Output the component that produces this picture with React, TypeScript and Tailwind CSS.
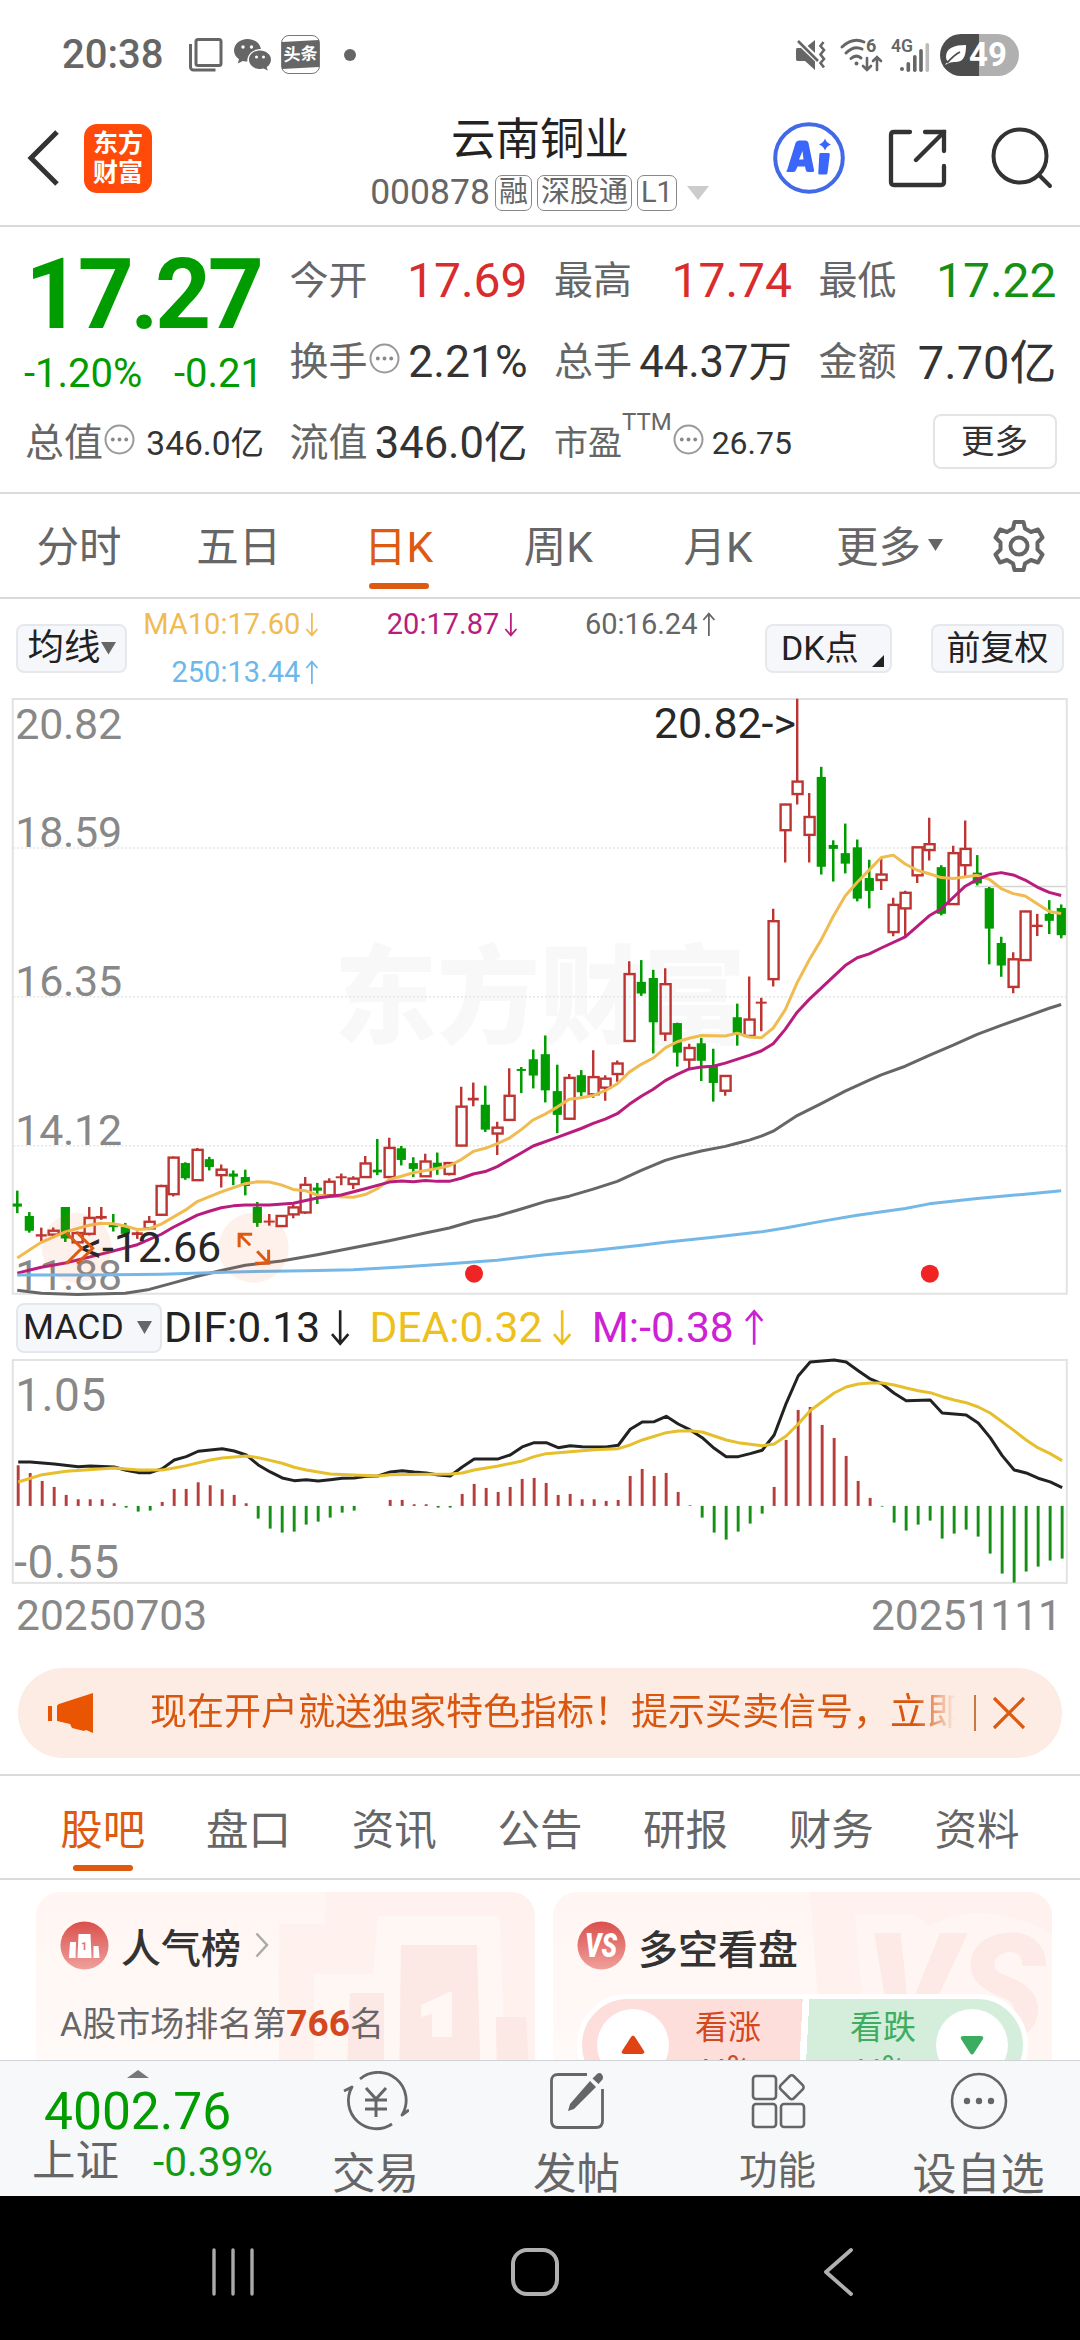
import type { ReactNode } from "react";
import { clsx } from "clsx";

type Candle = [color: "r" | "g", high: number, top: number, bottom: number, low: number];
type Point = [index: number, value: number];

const STEP = 12.005;
const K_SCALE = 610 / 1568;

const CANDLES: Candle[] = [
  ["g", 1285, 1318, 1326, 1343],
  ["g", 1340, 1350, 1388, 1393],
  ["r", 1380, 1397, 1403, 1415],
  ["r", 1380, 1388, 1398, 1402],
  ["g", 1327, 1327, 1408, 1417],
  ["r", 1390, 1394, 1418, 1420],
  ["r", 1327, 1355, 1396, 1400],
  ["r", 1327, 1350, 1357, 1360],
  ["g", 1345, 1373, 1379, 1390],
  ["g", 1368, 1378, 1396, 1400],
  ["r", 1390, 1392, 1399, 1409],
  ["r", 1350, 1365, 1382, 1385],
  ["r", 1270, 1273, 1347, 1350],
  ["r", 1197, 1200, 1294, 1300],
  ["g", 1212, 1214, 1253, 1257],
  ["r", 1175, 1180, 1258, 1260],
  ["g", 1198, 1204, 1224, 1233],
  ["r", 1218, 1231, 1245, 1277],
  ["g", 1233, 1241, 1249, 1271],
  ["g", 1231, 1250, 1273, 1297],
  ["g", 1314, 1327, 1368, 1378],
  ["r", 1345, 1362, 1367, 1375],
  ["r", 1348, 1350, 1376, 1378],
  ["r", 1320, 1328, 1346, 1356],
  ["r", 1250, 1270, 1341, 1345],
  ["g", 1265, 1277, 1285, 1319],
  ["r", 1253, 1262, 1297, 1299],
  ["r", 1241, 1248, 1253, 1271],
  ["r", 1248, 1254, 1268, 1281],
  ["r", 1196, 1215, 1250, 1252],
  ["g", 1152, 1231, 1238, 1245],
  ["r", 1149, 1175, 1250, 1253],
  ["g", 1170, 1176, 1206, 1220],
  ["g", 1199, 1214, 1229, 1250],
  ["r", 1190, 1210, 1248, 1250],
  ["g", 1187, 1213, 1228, 1244],
  ["r", 1212, 1214, 1242, 1246],
  ["r", 1018, 1069, 1169, 1171],
  ["r", 1007, 1046, 1053, 1068],
  ["g", 1015, 1064, 1128, 1134],
  ["r", 1108, 1123, 1138, 1193],
  ["r", 970, 1041, 1103, 1105],
  ["g", 967, 972, 977, 1034],
  ["g", 922, 947, 989, 1022],
  ["g", 886, 934, 1027, 1058],
  ["g", 961, 1029, 1090, 1137],
  ["r", 985, 995, 1100, 1102],
  ["g", 975, 988, 1032, 1042],
  ["r", 924, 993, 1037, 1046],
  ["r", 988, 997, 1020, 1054],
  ["r", 950, 958, 985, 1005],
  ["r", 695, 728, 900, 902],
  ["g", 692, 748, 778, 784],
  ["g", 717, 738, 852, 932],
  ["r", 713, 754, 881, 900],
  ["g", 853, 854, 930, 966],
  ["r", 907, 918, 948, 971],
  ["g", 892, 906, 951, 1003],
  ["g", 920, 963, 1008, 1056],
  ["r", 988, 990, 1028, 1041],
  ["g", 804, 839, 880, 912],
  ["r", 734, 845, 887, 890],
  ["r", 789, 799, 804, 875],
  ["r", 560, 592, 741, 760],
  ["r", 290, 292, 358, 441],
  ["r", 20, 233, 265, 292],
  ["r", 262, 324, 370, 441],
  ["g", 195, 221, 452, 472],
  ["g", 384, 396, 406, 490],
  ["g", 341, 417, 444, 469],
  ["g", 382, 402, 534, 541],
  ["g", 434, 481, 514, 559],
  ["r", 430, 472, 486, 512],
  ["r", 532, 550, 620, 631],
  ["r", 514, 519, 559, 631],
  ["r", 400, 402, 474, 494],
  ["r", 326, 394, 409, 436],
  ["g", 448, 453, 573, 577],
  ["r", 398, 417, 548, 550],
  ["r", 333, 406, 448, 476],
  ["g", 422, 467, 495, 500],
  ["g", 504, 507, 611, 703],
  ["g", 632, 648, 706, 735],
  ["r", 672, 690, 761, 777],
  ["r", 565, 567, 692, 694],
  ["r", 573, 601, 607, 630],
  ["g", 538, 573, 591, 625],
  ["g", 549, 558, 628, 636],
];

const MA10: Point[] = [
  [0, 1458], [2, 1418], [4, 1391], [6, 1374], [7, 1369], [8, 1370], [9, 1376], [10, 1385], [11, 1383],
  [12, 1371], [13, 1353], [14, 1335], [15, 1313], [17, 1288], [19, 1267], [20, 1262], [21, 1263],
  [22, 1270], [23, 1282], [24, 1285], [25, 1296], [26, 1299], [28, 1302], [29, 1295], [30, 1280],
  [31, 1257], [32, 1248], [33, 1239], [35, 1228], [36, 1221], [37, 1205], [38, 1184], [39, 1176],
  [40, 1164], [41, 1150], [42, 1128], [43, 1103], [44, 1088], [45, 1070], [46, 1050], [47, 1046],
  [48, 1040], [49, 1028], [50, 1010], [51, 980], [52, 960], [53, 944], [54, 918], [55, 902], [56, 893],
  [57, 886], [59, 887], [60, 880], [61, 890], [62, 892], [63, 867], [64, 820], [65, 750], [66, 692],
  [67, 640], [68, 580], [69, 527], [70, 492], [71, 460], [72, 428], [73, 422], [74, 445], [75, 461],
  [76, 470], [77, 480], [78, 482], [80, 474], [81, 484], [82, 508], [83, 521], [84, 527], [85, 547],
  [86, 567], [87, 572],
];

const MA20: Point[] = [
  [0, 1497], [2, 1482], [4, 1471], [6, 1456], [8, 1440], [10, 1424], [12, 1397], [13, 1379], [15, 1348],
  [16, 1338], [17, 1329], [18, 1324], [19, 1322], [21, 1322], [23, 1317], [25, 1304], [27, 1296],
  [29, 1280], [31, 1263], [32, 1260], [33, 1262], [34, 1259], [35, 1261], [36, 1261], [37, 1253],
  [38, 1242], [39, 1236], [40, 1223], [42, 1188], [43, 1170], [45, 1148], [47, 1125], [48, 1112],
  [49, 1101], [50, 1087], [51, 1063], [52, 1042], [53, 1024], [54, 1002], [55, 986], [56, 972],
  [57, 967], [58, 965], [59, 957], [61, 937], [62, 926], [63, 907], [64, 870], [65, 826], [66, 793],
  [67, 764], [69, 706], [70, 686], [71, 676], [72, 661], [74, 632], [75, 605], [76, 578], [77, 560],
  [78, 531], [79, 502], [80, 485], [81, 472], [82, 467], [83, 473], [84, 486], [85, 504], [86, 518],
  [87, 526],
];

const MA60: Point[] = [
  [0, 1541], [2, 1549], [5, 1552], [9, 1549], [11, 1539], [13, 1522], [15, 1505], [17, 1490], [19, 1477],
  [22, 1466], [25, 1450], [28, 1432], [31, 1414], [34, 1394], [36, 1381], [38, 1363], [40, 1350],
  [42, 1332], [44, 1313], [46, 1299], [48, 1281], [50, 1261], [52, 1233], [54, 1207], [55, 1198],
  [57, 1183], [59, 1171], [60, 1163], [61, 1155], [62, 1145], [63, 1132], [65, 1092], [67, 1061],
  [69, 1029], [71, 1001], [72, 987], [74, 965], [76, 937], [78, 911], [80, 883], [82, 860], [84, 838],
  [86, 816], [87, 806],
];

const MA250: Point[] = [
  [0, 1502], [6, 1502], [12, 1500], [18, 1494], [24, 1491], [28, 1488], [32, 1481], [36, 1473],
  [40, 1464], [44, 1450], [48, 1439], [52, 1425], [54, 1418], [58, 1405], [62, 1391], [64, 1381],
  [67, 1364], [70, 1348], [74, 1331], [76, 1319], [80, 1305], [84, 1294], [87, 1285],
];

const MACD_BARS = [
  122, 99, 75, 57, 33, 20, 20, 20, 8, -5, -17, -14, 12, 51, 51, 71, 62, 50, 33, 8, -38, -68, -80, -77,
  -56, -47, -35, -20, -14, 0, 0, 18, 18, 5, 5, -5, -5, 36, 66, 54, 42, 57, 81, 84, 69, 33, 36, 20, 20,
  15, 18, 90, 111, 90, 99, 42, 2, -35, -80, -101, -77, -53, -23, 57, 198, 288, 297, 243, 204, 150, 75,
  24, -2, -50, -74, -56, -44, -98, -83, -71, -92, -143, -203, -230, -197, -182, -164, -158,
];

const DIF: Point[] = [
  [0, 516], [1, 516], [3, 522], [5, 530], [6, 528], [8, 531], [9, 541], [10, 548], [11, 548], [12, 536],
  [13, 510], [14, 500], [15, 484], [17, 476], [18, 483], [19, 495], [20, 525], [21, 546], [22, 564],
  [23, 572], [24, 569], [25, 573], [26, 569], [27, 565], [28, 564], [29, 559], [30, 558], [31, 546],
  [32, 542], [33, 546], [34, 549], [35, 555], [36, 558], [37, 531], [38, 507], [40, 507], [41, 495],
  [42, 471], [43, 458], [44, 458], [45, 473], [46, 467], [47, 470], [49, 471], [50, 466], [51, 418],
  [52, 396], [53, 395], [54, 379], [55, 402], [56, 420], [57, 443], [58, 475], [59, 500], [60, 500],
  [61, 491], [62, 481], [63, 435], [64, 340], [65, 258], [66, 216], [68, 210], [69, 216], [70, 242],
  [71, 267], [72, 282], [73, 310], [74, 332], [76, 330], [77, 369], [79, 375], [80, 399], [81, 443],
  [82, 497], [83, 540], [84, 549], [85, 565], [86, 576], [87, 593],
];

const DEA: Point[] = [
  [0, 576], [2, 554], [4, 544], [8, 534], [10, 540], [12, 540], [13, 534], [14, 527], [16, 510],
  [17, 504], [19, 498], [20, 503], [22, 520], [23, 532], [24, 540], [26, 552], [28, 555], [30, 558],
  [31, 554], [36, 552], [37, 549], [38, 540], [40, 528], [42, 513], [43, 500], [44, 491], [46, 485],
  [48, 479], [50, 476], [51, 465], [52, 450], [54, 428], [55, 423], [56, 422], [57, 426], [59, 450],
  [60, 458], [62, 467], [63, 462], [64, 438], [65, 402], [66, 362], [67, 335], [68, 309], [69, 291],
  [70, 282], [71, 279], [72, 279], [73, 285], [74, 294], [75, 302], [76, 308], [77, 320], [78, 330],
  [79, 338], [80, 351], [81, 369], [83, 422], [84, 450], [85, 474], [86, 491], [87, 512],
];

function toPoints(data: Point[], x0: number, scale: number) {
  return data.map(([i, v]) => `${(x0 + i * STEP).toFixed(1)},${(v * scale).toFixed(1)}`).join(" ");
}

function StatusBar() {
  return (
    <div className="flex h-[110px] items-center justify-between pl-[62px] pr-[61px] text-[#666]">
      <div className="flex items-center">
        <span className="w-[127px] text-[40px] font-medium leading-none">20:38</span>
        <svg width="34" height="34" viewBox="0 0 34 34" fill="none" stroke="#666" strokeWidth="3">
          <rect x="7" y="1.5" width="25" height="26" rx="2" />
          <path d="M1.5 6v23a3 3 0 0 0 3 3h22" />
        </svg>
        <svg className="ml-[11px]" width="38" height="32" viewBox="0 0 38 32" fill="#666">
          <path d="M13.5 0C6 0 0 5 0 11.5c0 3.600 2 6.700 5 8.800L3.800 24.500l5-2.500c1.500.4 3 .6 4.500.6C13 15 19 10 27 10 26 4 20.500 0 13.500 0z" />
          <path d="M37 20.500c0-5-5-9-11-9s-11 4-11 9.200 5 9.200 11 9.200c1.300 0 2.500-.2 3.700-.5l4 2.200-1-3.500c2.600-1.700 4.300-4.400 4.300-7.600z" />
          <g fill="#fff">
            <circle cx="9" cy="8" r="1.700" />
            <circle cx="17.500" cy="8" r="1.700" />
            <circle cx="22.500" cy="18" r="1.500" />
            <circle cx="29.500" cy="18" r="1.500" />
          </g>
        </svg>
        <div className="ml-[9px] flex h-[39px] w-[39px] items-center rounded-[8px] border border-[#777]">
          <div className="flex h-[27px] w-full -skew-y-3 items-center justify-center bg-[#666] text-[17px] font-bold leading-none text-white">
            头条
          </div>
        </div>
        <span className="ml-[24px] h-[12px] w-[12px] rounded-full bg-[#666]" />
      </div>
      <div className="flex items-center">
        <svg width="30" height="32" viewBox="0 0 30 32">
          <path d="M1 9h8l10-8v30L9 22H1.500Q0 22 0 20V11Q0 9 1 9z" fill="#666" />
          <path d="M0 0l23 22" stroke="#fff" strokeWidth="6" />
          <path d="M2 2l20 20" stroke="#666" strokeWidth="2.600" />
          <path d="M27.500 3l-3 4 3.500 4-3.500 4.500 3.500 4.500-3.500 4 3.500 4.500" fill="none" stroke="#666" strokeWidth="2.600" />
        </svg>
        <svg className="ml-[14px] overflow-visible" width="46" height="34" viewBox="0 0 46 34" fill="none" stroke="#666" strokeWidth="3" strokeLinecap="round">
          <path d="M2 9Q13-1 24 4" />
          <path d="M6 15Q14 7 22 11" />
          <path d="M11 20.500Q16 16 21 20" />
          <circle cx="16.500" cy="25.500" r="1" fill="#666" strokeWidth="2" />
          <path d="M27 20v12M23 28l4 4 4-4M37 32V19M33 23l4-4 4 4" strokeWidth="2.600" />
          <text x="26" y="14" fontSize="18" fontWeight="700" fill="#666" stroke="none">
            6
          </text>
        </svg>
        <svg className="ml-[5px] overflow-visible" width="40" height="34" viewBox="0 0 40 34" fill="#666">
          <text x="0" y="14" fontSize="18" fontWeight="600" textLength="22" lengthAdjust="spacingAndGlyphs">
            4G
          </text>
          <circle cx="11" cy="31" r="2" />
          <rect x="15.500" y="24" width="3.600" height="10" rx="1.800" />
          <rect x="22" y="17" width="3.600" height="17" rx="1.800" />
          <rect x="28.200" y="11" width="3.600" height="23" rx="1.800" />
          <rect x="34.500" y="5" width="3.600" height="29" rx="1.800" fill="#bbb" />
        </svg>
        <div className="ml-[9px] flex h-[42px] w-[79px] items-center overflow-hidden rounded-full bg-linear-to-r from-[#4d4d4d] from-50% to-[#b0b0b0] to-50%">
          <svg className="ml-[4px] shrink-0" width="23" height="22" viewBox="0 0 23 22">
            <path d="M2 13C2 4 10 1 22 1c0 8-1 17-10 17-3 0-5 0-7 1L1 21l3-4Q2 16 2 13z" fill="#fff" />
            <path d="M3 19Q10 11 16 8" fill="none" stroke="#4d4d4d" strokeWidth="1.800" />
          </svg>
          <span className="ml-[2px] text-[33px] font-bold leading-none text-white">49</span>
        </div>
      </div>
    </div>
  );
}

function Badge({ children }: { children: ReactNode }) {
  return (
    <span className="flex h-[36px] items-center rounded-[7px] border-[1.500px] border-[#888] px-[3px] text-[29px] leading-none">
      {children}
    </span>
  );
}

function Header() {
  return (
    <header className="grid h-[117px] grid-cols-[1fr_auto_1fr] border-b-2 border-[#dadada]">
      <div className="flex h-[97px] items-center pl-[27px]">
        <svg width="32" height="56" viewBox="0 0 32 56" fill="none" stroke="#333" strokeWidth="5">
          <path d="M30 2L4 28l26 26" />
        </svg>
        <div className="ml-[25px] flex h-[69px] w-[68px] flex-col items-center justify-center rounded-[13px] bg-[#ff4a0a] text-[25px] font-bold leading-[29px] text-white">
          <span>东方</span>
          <span>财富</span>
        </div>
      </div>
      <div className="flex flex-col items-center">
        <h1 className="flex h-[58px] items-center pt-[3px] text-[44.500px] leading-none text-[#222]">云南铜业</h1>
        <div className="flex h-[50px] items-center gap-[5px] text-[#666]">
          <span className="text-[35.500px] leading-none">000878</span>
          <Badge>融</Badge>
          <Badge>深股通</Badge>
          <Badge>L1</Badge>
          <svg className="ml-[4px]" width="24" height="16" viewBox="0 0 24 16">
            <path d="M1 1h22L12 15z" fill="#ccc" />
          </svg>
        </div>
      </div>
      <div className="flex h-[97px] items-center justify-end pr-[27px]">
        <svg width="72" height="72" viewBox="0 0 72 72">
          <circle cx="36" cy="36" r="33.800" fill="none" stroke="#4169e8" strokeWidth="4" />
          <g fill="#3a66fb">
            <path d="M14 48.500L22.500 21Q23.500 18.500 26 18.500h6.500Q35 18.500 35.500 21l5.500 27q.4 2-2 2h-4q-2 0-2.200-2l-.8-3.500h-7.500l-1.500 3.500q-.7 2-2.500 2h-5q-2.200 0-2.500-1.500zM26 37.500h4.500l-1-8.500z" fillRule="evenodd" />
            <path d="M47.500 31h8q1.500 0 1.300 1.500L54.500 51q-.3 1.500-1.800 1.500h-6Q45 52.500 45.300 51l1-18.500q0-1.500 1.200-1.500z" />
            <path d="M52 16.500q1.500 4.500 6 6-4.500 1.500-6 6-1.500-4.500-6-6 4.500-1.500 6-6z" />
          </g>
        </svg>
        <svg className="ml-[43px]" width="59" height="59" viewBox="0 0 59 59" fill="none" stroke="#333" strokeWidth="4.300" strokeLinecap="round">
          <path d="M22 3H6Q3 3 3 6v47q0 3 3 3h47q3 0 3-3V37" />
          <path d="M37 3h19v19" />
          <path d="M56 3L28 31" />
        </svg>
        <svg className="ml-[44px]" width="62" height="62" viewBox="0 0 62 62" fill="none" stroke="#333" strokeWidth="4" strokeLinecap="round">
          <circle cx="29" cy="29" r="26.500" />
          <path d="M48 48l11 11" />
        </svg>
      </div>
    </header>
  );
}

function MoreDots() {
  return (
    <svg className="-mt-[7px] ml-px shrink-0" width="31" height="31" viewBox="0 0 31 31">
      <circle cx="15.500" cy="15.500" r="14" fill="none" stroke="#999" strokeWidth="2" />
      <g fill="#888">
        <circle cx="8.800" cy="15.500" r="1.900" />
        <circle cx="15.500" cy="15.500" r="1.900" />
        <circle cx="22.200" cy="15.500" r="1.900" />
      </g>
    </svg>
  );
}

interface QuoteCellProps {
  label: string;
  value: string;
  valueClass: string;
  dots?: boolean;
}

function QuoteCell({ label, value, valueClass, dots }: QuoteCellProps) {
  return (
    <div className="flex h-[81px] items-center justify-between">
      <span className="flex items-center text-[39px] leading-none text-[#666]">
        {label}
        {dots && <MoreDots />}
      </span>
      <span className={clsx("whitespace-nowrap leading-none", valueClass)}>{value}</span>
    </div>
  );
}

function Quote() {
  return (
    <section className="grid h-[267px] grid-cols-[238px_238px_238px_238px] content-start gap-x-[26.500px] border-b-2 border-[#dadada] pl-[25px] pt-[14px]">
      <div className="row-span-2 h-[162px] text-[#009c00]">
        <div className="pt-[4px] text-[98px] font-bold leading-[100px] tracking-[-3.600px]">17.27</div>
        <div className="flex items-center justify-between pt-[6px] text-[40px] leading-[46px]">
          <span className="-ml-px">-1.20%</span>
          <span>-0.21</span>
        </div>
      </div>
      <QuoteCell label="今开" value="17.69" valueClass="text-[48px] text-[#d92c2c]" />
      <QuoteCell label="最高" value="17.74" valueClass="text-[48px] text-[#d92c2c]" />
      <QuoteCell label="最低" value="17.22" valueClass="text-[48px] text-[#149014]" />
      <QuoteCell label="换手" value="2.21%" valueClass="text-[44.500px] text-[#333]" dots />
      <QuoteCell label="总手" value="44.37万" valueClass="text-[43.500px] text-[#333]" />
      <QuoteCell label="金额" value="7.70亿" valueClass="text-[47px] text-[#333]" />
      <QuoteCell label="总值" value="346.0亿" valueClass="-mr-px text-[33.500px] text-[#333]" dots />
      <QuoteCell label="流值" value="346.0亿" valueClass="text-[43.500px] text-[#333]" />
      <div className="flex h-[81px] items-center justify-between text-[#666]">
        <span className="flex items-center text-[34px] leading-none">
          市盈
          <span className="-mt-[42px] text-[24px] leading-none">TTM</span>
          <MoreDots />
        </span>
        <span className="text-[32px] leading-none text-[#333]">26.75</span>
      </div>
      <div className="flex h-[81px] items-center justify-end">
        <button className="mb-[4px] h-[55px] w-[124px] rounded-[8px] border-2 border-[#e4e4e4] text-[33.500px] leading-none text-[#333]">
          更多
        </button>
      </div>
    </section>
  );
}

const PERIODS = ["分时", "五日", "日K", "周K", "月K"];

function PeriodTabs() {
  return (
    <nav className="flex h-[105px] border-b-2 border-[#dadada] text-[42.500px] leading-none text-[#666]">
      {PERIODS.map((p) => (
        <div
          key={p}
          className={clsx("flex w-[159.800px] flex-col items-center pt-[32px]", p === "日K" && "text-[#dd5a10]")}
        >
          <span className="-ml-[2px] leading-[44px]">{p}</span>
          {p === "日K" && <span className="mt-[13px] h-[6px] w-[60px] rounded-full bg-[#dd5a10]" />}
        </div>
      ))}
      <div className="flex w-[183px] justify-center pt-[32px] leading-[44px]">
        更多
        <svg className="ml-[6px] mt-[12px]" width="18" height="15" viewBox="0 0 18 15">
          <path d="M1 1h15L8.500 13z" fill="#666" />
        </svg>
      </div>
      <svg className="ml-[10px] mt-[25px]" width="54" height="54" viewBox="0 0 54 54" fill="none" stroke="#666" strokeWidth="4" strokeLinejoin="round">
        <path d="M22.500 3h9l1.500 6.500 6 3.500 7-2.500 4.500 8-5 5v7l5 5-4.500 8-7-2.500-6 3.500-1.500 6.500h-9L21 44.500 15 41l-7 2.500-4.500-8 5-5v-7l-5-5 4.500-8L15 13l6-3.500z" />
        <circle cx="27" cy="27" r="8.500" />
      </svg>
    </nav>
  );
}

function Arrow({ up, size = 28 }: { up?: boolean; size?: number }) {
  return (
    <svg
      className={clsx("inline-block shrink-0", up && "rotate-180")}
      width={size * 0.55}
      height={size}
      viewBox="0 0 15.400 28"
      fill="none"
      stroke="currentColor"
      strokeWidth="2"
    >
      <path d="M7.700 1v25M1.500 19l6.200 7.200L13.900 19" />
    </svg>
  );
}

function MaLabel({ text, up, className }: { text: string; up?: boolean; className: string }) {
  return (
    <span className={clsx("flex h-[48px] items-center gap-[5px] text-[29px] leading-none", className)}>
      {text}
      <Arrow up={up} size={25} />
    </span>
  );
}

function MaRow() {
  return (
    <div className="flex h-[92px] items-start px-[16px]">
      <button className="mt-[25px] flex h-[49px] w-[111px] items-center justify-center rounded-[8px] border-2 border-[#e6e8eb] bg-[#f6f7fa] text-[36.500px] leading-none text-[#222]">
        均线
        <svg className="shrink-0" width="15" height="14" viewBox="0 0 15 14">
          <path d="M0 1h15L7.500 13.500z" fill="#666" />
        </svg>
      </button>
      <div className="ml-[15px] mt-[2px] grid w-[600px] grid-cols-[177px_266px_157px]">
        <MaLabel text="MA10:17.60" className="justify-end text-[#f0bb50]" />
        <MaLabel text="20:17.87" className="justify-end pr-[67px] text-[#b81c7c]" />
        <MaLabel text="60:16.24" up className="text-[#666]" />
        <MaLabel text="250:13.44" up className="justify-end text-[#6cb8ea]" />
      </div>
      <button className="ml-auto mt-[25px] flex h-[49px] w-[127px] items-center rounded-[8px] border-2 border-[#e6e8eb] bg-[#f6f7fa] pl-[14px] text-[34px] leading-none text-[#222]">
        DK点
        <svg className="ml-[13px] mt-[26px]" width="12" height="12" viewBox="0 0 12 12">
          <path d="M12 0v12H0z" fill="#222" />
        </svg>
      </button>
      <button className="ml-[39px] mt-[25px] h-[49px] w-[133px] rounded-[8px] border-2 border-[#e6e8eb] bg-[#f6f7fa] text-[34px] leading-none text-[#222]">
        前复权
      </button>
    </div>
  );
}

const AXIS = [
  { label: "20.82", y: 48.5 },
  { label: "18.59", y: 156.5 },
  { label: "16.35", y: 305.5 },
  { label: "14.12", y: 454.5 },
  { label: "11.88", y: 599.5 },
];

function CandleShape({ candle, index }: { candle: Candle; index: number }) {
  const [color, high, top, bottom, low] = candle;
  const x = 17 + index * STEP;
  const y = (v: number) => v * K_SCALE;
  if (color === "g") {
    return (
      <g fill="#009c00">
        <rect x={x - 1.2} y={y(high)} width="2.500" height={y(low - high)} />
        <rect x={x - 4.5} y={y(top)} width="9.200" height={y(bottom - top)} />
      </g>
    );
  }
  // a body thinner than its outline is drawn as a plain bar
  if (bottom - top < 8) {
    return (
      <g fill="#bd3532">
        <rect x={x - 1.2} y={y(high)} width="2.500" height={y(low - high)} />
        <rect x={x - 5.5} y={y(top)} width="11" height={y(bottom - top)} />
      </g>
    );
  }
  return (
    <g fill="none" stroke="#bd3532" strokeWidth="2.400">
      <path d={`M${x} ${y(high)}V${y(top)}M${x} ${y(bottom)}V${y(low)}`} />
      <rect x={x - 4.6} y={y(top)} width="10" height={y(bottom - top)} />
    </g>
  );
}

function KChart() {
  return (
    <svg className="block" width="1080" height="610" viewBox="0 0 1080 610">
      <text x="334" y="344" fontSize="107" fontWeight="800" fill="#f8f8f8" textLength="412" lengthAdjust="spacingAndGlyphs">
        东方财富
      </text>
      <g stroke="#e6e6e6" strokeWidth="1.500" strokeDasharray="2 2">
        <path d="M13 157H1067M13 306H1067M13 455H1067" />
      </g>
      <rect x="12.500" y="8" width="1054.500" height="595" fill="none" stroke="#e2e2e2" strokeWidth="2" />
      <path d="M975 195.500H1066" stroke="#d4d4d4" strokeWidth="1.500" />
      {CANDLES.map((c, i) => (
        <CandleShape key={i} candle={c} index={i} />
      ))}
      <g fontSize="43" fill="#888">
        {AXIS.map((a) => (
          <text key={a.label} x="15" y={a.y} textLength="107">
            {a.label}
          </text>
        ))}
      </g>
      <g fill="none" strokeWidth="3" strokeLinejoin="round">
        <polyline points={toPoints(MA10, 17, K_SCALE)} stroke="#f0bb50" />
        <polyline points={toPoints(MA20, 17, K_SCALE)} stroke="#b81c7c" />
        <polyline points={toPoints(MA60, 17, K_SCALE)} stroke="#666" />
        <polyline points={toPoints(MA250, 17, K_SCALE)} stroke="#74b8e8" />
      </g>
      <circle cx="76.500" cy="557" r="35" fill="#f05a14" fillOpacity="0.09" />
      <circle cx="253.500" cy="557" r="35" fill="#f05a14" fillOpacity="0.09" />
      <g fontSize="43" fill="#282828">
        <text x="654" y="47" textLength="142">
          {"20.82->"}
        </text>
        <text x="80" y="571" textLength="141">
          {"<-12.66"}
        </text>
      </g>
      <g fill="none" stroke="#dd5a10" strokeWidth="3">
        <path d="M66 542l15.500 15.500L66 573M77 542l15.500 15.500L77 573" />
        <path d="M252 543.500h-13v13M239 543.500l11 11M255 572.500h13.500v-13.500M268.500 572.500l-11.500-12" />
      </g>
      <circle cx="474" cy="583" r="9" fill="#f02424" />
      <circle cx="930" cy="583" r="9" fill="#f02424" />
    </svg>
  );
}

function MacdRow() {
  return (
    <div className="flex h-[55px] items-center pl-[16px] text-[42.500px] leading-none">
      <button className="flex h-[50px] w-[146px] items-center justify-between rounded-[8px] border-2 border-[#e4e8ee] bg-[#f6f7fa] pl-[5px] pr-[8px] text-[35.500px] leading-none text-[#222]">
        MACD
        <svg width="15" height="13" viewBox="0 0 15 13">
          <path d="M0 0h15L7.500 13z" fill="#666" />
        </svg>
      </button>
      <span className="ml-[2px] flex items-center gap-[10px] text-[#222]">
        DIF:0.13
        <Arrow size={37} />
      </span>
      <span className="ml-[19px] flex items-center gap-[10px] text-[#eec01c]">
        DEA:0.32
        <Arrow size={37} />
      </span>
      <span className="ml-[19px] flex items-center gap-[10px] text-[#cc22d4]">
        M:-0.38
        <Arrow up size={37} />
      </span>
    </div>
  );
}

function MacdChart() {
  return (
    <svg className="block" width="1080" height="235" viewBox="0 65 1080 235">
      <rect x="12.500" y="70" width="1054.500" height="223" fill="none" stroke="#e2e2e2" strokeWidth="2" />
      {MACD_BARS.map((v, i) => (
        <rect
          key={i}
          x={16.5 + i * STEP}
          y={v > 0 ? 216 - v / 3 : 216}
          width="2.900"
          height={Math.abs(v) / 3}
          fill={v > 0 ? "#b83c3a" : "#149014"}
        />
      ))}
      <g fontSize="46" fill="#888">
        <text x="15" y="121" textLength="91">
          1.05
        </text>
        <text x="14" y="288.500" textLength="105">
          -0.55
        </text>
      </g>
      <g fill="none" strokeWidth="3" strokeLinejoin="round">
        <polyline points={toPoints(DIF, 18, 1 / 3)} stroke="#222" />
        <polyline points={toPoints(DEA, 18, 1 / 3)} stroke="#e6bf2c" />
      </g>
    </svg>
  );
}

function Banner() {
  return (
    <div className="mx-[18px] mt-[26px] flex h-[90px] items-center rounded-full bg-[#fcece3] pl-[30px] text-[#d9560e]">
      <svg width="46" height="40" viewBox="0 0 46 40" fill="#ea5504">
        <path d="M0 13h4v15H0zM9 13Q9 12 11 11L45 0v40l-7-3-2 1-12-3-2-4-13-3z" />
      </svg>
      <div className="ml-[56px] w-[806px] overflow-hidden whitespace-nowrap text-[37px] leading-[50px] [mask-image:linear-gradient(to_right,#000_95%,transparent_100%)]">
        现在开户就送独家特色指标！提示买卖信号，立即领取
      </div>
      <span className="ml-[18px] h-[36px] w-[2px] bg-[#c97845]" />
      <svg className="ml-[16px]" width="34" height="34" viewBox="0 0 34 34" stroke="#dd5a10" strokeWidth="3.200">
        <path d="M2 2l30 30M32 2L2 32" />
      </svg>
    </div>
  );
}

const SECTIONS = ["股吧", "盘口", "资讯", "公告", "研报", "财务", "资料"];

function SectionTabs() {
  return (
    <nav className="mt-[16px] flex h-[106px] border-y-2 border-[#dadada] px-[30px] text-[42.500px] text-[#666]">
      {SECTIONS.map((s, i) => (
        <div key={s} className={clsx("flex w-[145.700px] flex-col items-center pt-[33px]", i === 0 && "text-[#dd5a10]")}>
          <span className="leading-[44px]">{s}</span>
          {i === 0 && <span className="mt-[12px] h-[6px] w-[60px] rounded-full bg-[#dd5a10]" />}
        </div>
      ))}
    </nav>
  );
}

function RankCard() {
  return (
    <div className="relative h-[200px] w-[499px] overflow-hidden rounded-t-[24px] bg-linear-to-b from-[#fff6f3] to-[#fffaf8]">
      <svg className="absolute inset-0" width="499" height="200" viewBox="0 0 499 200">
        <path d="M290 0h209v200H243V32h46z" fill="#fef1ee" />
        <path d="M342 24h122l6 176H278V82h59z" fill="#fff7f4" />
        <path d="M365 53h76l4 147h-82zM314 101h34v99h-38zM460 125h30l4 75h-33z" fill="#fce8e5" />
        <path d="M385 113l31-14v46h-17v-24l-14 4zM396 121h20v24h-20z" fill="#fff7f4" />
      </svg>
      <div className="relative flex items-start pl-[24px] pt-[29px]">
        <svg width="49" height="49" viewBox="0 0 49 49">
          <defs>
            <linearGradient id="badge" x1="0" y1="0" x2="0" y2="1">
              <stop offset="0" stopColor="#d9504c" />
              <stop offset="1" stopColor="#f0a09c" />
            </linearGradient>
          </defs>
          <circle cx="24.500" cy="24.500" r="24" fill="url(#badge)" />
          <path d="M10 21h6l-.5 16H9zM18.500 13h12l1 24h-14zM33.500 25h5l1 12h-6z" fill="#fff" />
          <text x="21" y="29" fontSize="11" fontWeight="700" fill="#e27773">
            1
          </text>
        </svg>
        <span className="ml-[12px] pt-[4px] text-[40px] font-medium leading-[49px] text-[#333]">人气榜</span>
        <svg className="ml-[14px] mt-[11px]" width="14" height="26" viewBox="0 0 14 26" fill="none" stroke="#aaa" strokeWidth="2.500">
          <path d="M1.500 1.500L12 13 1.500 24.500" />
        </svg>
      </div>
      <p className="relative pl-[24px] pt-[30px] text-[34px] leading-[40px] text-[#666]">
        A股市场排名第<b className="text-[37px] text-[#d4481e]">766</b>名
      </p>
    </div>
  );
}

function VoteRate() {
  return (
    <div className="pt-[2px] text-[28px] leading-[38px]">
      44<span className="text-[33px]">%</span>
    </div>
  );
}

function VoteCard() {
  return (
    <div className="relative h-[200px] w-[499px] overflow-hidden rounded-t-[24px] bg-linear-to-b from-[#fff6f3] to-[#fffaf8]">
      <svg className="absolute inset-0" width="499" height="200" viewBox="0 0 499 200">
        <path d="M257 0h242v200H272z" fill="#fef1ee" />
        <path d="M302 22h60l14 13q28-18 64-13 40 6 59 22v156H317z" fill="#fff6f3" />
        <text x="312" y="148" fontSize="150" fontWeight="900" fontStyle="italic" fill="#fde9e6" textLength="180" lengthAdjust="spacingAndGlyphs">
          VS
        </text>
      </svg>
      <div className="relative flex items-start pl-[24px] pt-[29px]">
        <svg width="49" height="49" viewBox="0 0 49 49">
          <circle cx="24.500" cy="24.500" r="24" fill="url(#badge)" />
          <text x="8" y="36" fontSize="33" fontWeight="900" fontStyle="italic" fill="#fff" textLength="32" lengthAdjust="spacingAndGlyphs">
            VS
          </text>
        </svg>
        <span className="ml-[12px] pt-[4px] text-[40px] font-medium leading-[51px] text-[#333]">多空看盘</span>
      </div>
      <div className="relative ml-[24px] mt-[18px] flex h-[102px] w-[451px] overflow-hidden rounded-full border-[5px] border-white bg-linear-[93deg,#fddedb_49.500%,#fff_49.500%,#fff_51%,#d4eedb_51%]">
        <span className="ml-[15px] mt-[10px] flex h-[72px] w-[72px] shrink-0 items-center justify-center rounded-full bg-white">
          <svg width="24" height="20" viewBox="0 0 24 20">
            <path d="M10 2q2-3 4 0l9 14q1 3-2 3H3q-3 0-2-3z" fill="#e04416" />
          </svg>
        </span>
        <div className="ml-[26px] mt-[10px] text-[33px] leading-[38px] text-[#d4481e]">
          看涨
          <VoteRate />
        </div>
        <div className="ml-auto mt-[10px] text-[33px] leading-[38px] text-[#3ead62]">
          看跌
          <VoteRate />
        </div>
        <span className="ml-[20px] mr-[15px] mt-[10px] flex h-[72px] w-[72px] shrink-0 items-center justify-center rounded-full bg-white">
          <svg width="24" height="20" viewBox="0 0 24 20">
            <path d="M10 18q2 3 4 0l9-14q1-3-2-3H3Q0 1 1 4z" fill="#3aad60" />
          </svg>
        </span>
      </div>
    </div>
  );
}

function BarItem({ label, className, children }: { label: string; className?: string; children: ReactNode }) {
  return (
    <div className="flex w-[201px] flex-col items-center pt-[10px]">
      {children}
      <span className={clsx("whitespace-nowrap leading-[40px]", className ?? "mt-[24px] text-[43.500px]")}>{label}</span>
    </div>
  );
}

function BottomBar() {
  return (
    <footer className="flex h-[136px] overflow-hidden border-t border-[#d0d2d6] bg-[#f6f8fa] text-[#666]">
      <div className="w-[275px] text-[#149a14]">
        <svg className="ml-[127px] mt-[9px]" width="22" height="8" viewBox="0 0 22 8">
          <path d="M0 8h22L11 0z" fill="#777" />
        </svg>
        <div className="pl-[44px] pt-[9px] text-[51.500px] leading-[50px] text-[#009c00]">4002.76</div>
        <div className="flex items-center pl-[32px] text-[40.500px] leading-[50px]">
          <span className="w-[121px] text-[43.500px] text-[#666]">上证</span>
          -0.39%
        </div>
      </div>
      <BarItem label="交易">
        <svg width="66" height="60" viewBox="0 0 66 60" fill="none" stroke="#666" strokeWidth="2.800">
          <path d="M17 8A28 28 0 0 1 59 44l7-5" strokeLinejoin="round" />
          <path d="M49 53A28 28 0 0 1 9 16L1 20" strokeLinejoin="round" />
          <path d="M23 17l10 11 10-11M22 29h22M22 38h22M33 28v18" strokeWidth="3" />
        </svg>
      </BarItem>
      <BarItem label="发帖">
        <svg width="56" height="60" viewBox="0 0 56 60">
          <path d="M38 3.500H9q-6.500 0-6.500 6.500v40q0 6.500 6.500 6.500h38q6.500 0 6.500-6.500V18" fill="none" stroke="#666" strokeWidth="2.800" />
          <path d="M41 10l6 6-22 22-6 2 2-7zM43.500 7.500L48 3q3-2 5 .5t.5 5L49.500 13z" fill="#666" />
        </svg>
      </BarItem>
      <BarItem label="功能" className="mt-[20px] text-[38.500px]">
        <svg width="56" height="60" viewBox="0 0 56 60" fill="none" stroke="#666" strokeWidth="2.600">
          <rect x="3" y="5" width="23" height="23" rx="3" />
          <rect x="3" y="33" width="23" height="23" rx="3" />
          <rect x="31" y="33" width="23" height="23" rx="3" />
          <rect x="32.500" y="7" width="18.500" height="18.500" rx="3" transform="rotate(45 41.750 16.250)" />
        </svg>
      </BarItem>
      <BarItem label="设自选" className="mt-[24px] text-[44px]">
        <svg width="60" height="60" viewBox="0 0 60 60">
          <circle cx="30" cy="30" r="27" fill="none" stroke="#666" strokeWidth="2.600" />
          <g fill="#666">
            <circle cx="18" cy="30" r="3.200" />
            <circle cx="30" cy="30" r="3.200" />
            <circle cx="42" cy="30" r="3.200" />
          </g>
        </svg>
      </BarItem>
    </footer>
  );
}

function SystemNav() {
  return (
    <div className="flex h-[144px] items-center bg-black pl-[211px] pt-[8px]">
      <svg width="44" height="48" viewBox="0 0 44 48" stroke="#aaa" strokeWidth="3.400" strokeLinecap="round">
        <path d="M3 2v44M22 2v44M41 2v44" />
      </svg>
      <svg className="ml-[255px]" width="50" height="50" viewBox="0 0 50 50" fill="none" stroke="#b0b0b0" strokeWidth="4">
        <rect x="3" y="3" width="44" height="44" rx="14" />
      </svg>
      <svg className="ml-[264px]" width="29" height="50" viewBox="0 0 29 50" fill="none" stroke="#b0b0b0" strokeWidth="3.800" strokeLinecap="round" strokeLinejoin="round">
        <path d="M27 3L2 25l25 22" />
      </svg>
    </div>
  );
}

export default function App() {
  return (
    <div className="flex h-[2340px] w-[1080px] flex-col overflow-hidden bg-white font-['Roboto','Noto_Sans_CJK_SC',sans-serif]">
      <StatusBar />
      <Header />
      <Quote />
      <PeriodTabs />
      <MaRow />
      <KChart />
      <MacdRow />
      <MacdChart />
      <div className="flex h-[52px] items-center justify-between pl-[16px] pr-[18px] text-[42.500px] leading-none text-[#888]">
        <span>20250703</span>
        <span>20251111</span>
      </div>
      <Banner />
      <SectionTabs />
      <div className="flex h-[180px] justify-between overflow-hidden bg-white pl-[36px] pr-[28px] pt-[12px]">
        <RankCard />
        <VoteCard />
      </div>
      <BottomBar />
      <SystemNav />
    </div>
  );
}
